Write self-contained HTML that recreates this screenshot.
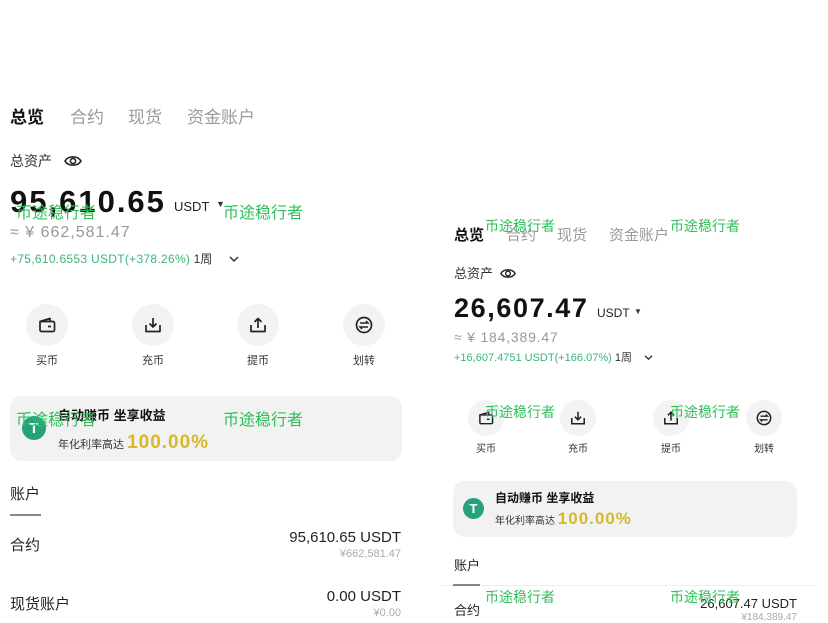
<!DOCTYPE html>
<html><head><meta charset="utf-8">
<style>
*{margin:0;padding:0;box-sizing:border-box}
body{width:828px;height:621px;background:#fff;position:relative;overflow:hidden;font-family:"Liberation Sans","Noto Sans CJK SC",sans-serif;color:#111}
.a{position:absolute;white-space:nowrap;line-height:1}
.tab{color:#9a9a9a}
.b{font-weight:bold}
.wm{position:absolute;color:#2fbf5a;white-space:nowrap;line-height:1}
.ic{position:absolute;border-radius:50%;background:#f3f3f3;display:flex;align-items:center;justify-content:center}
.card{position:absolute;background:#f2f2f2;border-radius:12px}
.t{position:absolute;border-radius:50%;background:#26a17b;color:#fff;font-weight:bold;display:flex;align-items:center;justify-content:center}
.gold{color:#d8b828;font-weight:bold;letter-spacing:1px}
.grn{color:#3bb57a}
</style></head><body>

<!-- LEFT -->
<div class="a b" style="left:10px;top:109px;font-size:17px">总览</div>
<div class="a tab" style="left:70px;top:109px;font-size:17px">合约</div>
<div class="a tab" style="left:128px;top:109px;font-size:17px">现货</div>
<div class="a tab" style="left:187px;top:109px;font-size:17px">资金账户</div>
<div class="a" style="left:10px;top:154px;font-size:14px;color:#333">总资产</div>
<svg class="a" style="left:64px;top:154px" width="18" height="14" viewBox="0 0 18 14"><path d="M1 7C4 1.5 14 1.5 17 7C14 12.5 4 12.5 1 7Z" fill="none" stroke="#222" stroke-width="1.6"/><circle cx="9" cy="7" r="2.6" fill="none" stroke="#222" stroke-width="1.6"/></svg>
<div class="a b" style="left:10px;top:186px;font-size:31px;letter-spacing:2px">95,610.65</div>
<div class="a" style="left:174px;top:200px;font-size:13px;color:#222">USDT</div>
<div class="a" style="left:216px;top:200px;font-size:9px;color:#333">▼</div>
<div class="a" style="left:10px;top:225px;font-size:16px;color:#999;letter-spacing:1px">≈ ¥ 662,581.47</div>
<div class="a" style="left:10px;top:253px;font-size:12px"><span class="grn" style="letter-spacing:0.3px">+75,610.6553 USDT(+378.26%)</span> <span style="color:#333">1周</span></div>
<svg class="a" style="left:229px;top:255px" width="10" height="8" viewBox="0 0 10 8"><path d="M1 2L5 6L9 2" fill="none" stroke="#333" stroke-width="1.5"/></svg>

<div class="ic" style="left:26px;top:304px;width:42px;height:42px"><svg width="18" height="16" viewBox="0 0 18 16"><path d="M2 4.5L12 1.5V4.5M2 4.5H15a1.5 1.5 0 0 1 1.5 1.5V13a1.5 1.5 0 0 1-1.5 1.5H3.5A1.5 1.5 0 0 1 2 13Z" fill="none" stroke="#222" stroke-width="1.7" stroke-linejoin="round"/><path d="M10 9.5H13" stroke="#222" stroke-width="1.7"/></svg></div>
<div class="ic" style="left:132px;top:304px;width:42px;height:42px"><svg width="18" height="18" viewBox="0 0 18 18"><path d="M9 2V11M5.5 7.5L9 11L12.5 7.5M2 9V15.5H16V9" fill="none" stroke="#222" stroke-width="1.7" stroke-linejoin="round"/></svg></div>
<div class="ic" style="left:237px;top:304px;width:42px;height:42px"><svg width="18" height="18" viewBox="0 0 18 18"><path d="M9 12V2.5M5.5 6L9 2.5L12.5 6M2 9V15.5H16V9" fill="none" stroke="#222" stroke-width="1.7" stroke-linejoin="round"/></svg></div>
<div class="ic" style="left:343px;top:304px;width:42px;height:42px"><svg width="18" height="18" viewBox="0 0 18 18"><circle cx="9" cy="9" r="7.5" fill="none" stroke="#222" stroke-width="1.7"/><path d="M5 7H13L11 5M13 11H5L7 13" fill="none" stroke="#222" stroke-width="1.5"/></svg></div>
<div class="a" style="left:36px;top:356px;font-size:11px;color:#333">买币</div>
<div class="a" style="left:142px;top:356px;font-size:11px;color:#333">充币</div>
<div class="a" style="left:247px;top:356px;font-size:11px;color:#333">提币</div>
<div class="a" style="left:353px;top:356px;font-size:11px;color:#333">划转</div>

<div class="card" style="left:10px;top:396px;width:392px;height:65px"></div>
<div class="t" style="left:22px;top:416px;width:24px;height:24px;font-size:15px">T</div>
<div class="a b" style="left:58px;top:409px;font-size:13px">自动赚币 坐享收益</div>
<div class="a" style="left:58px;top:433px;font-size:11px;color:#333">年化利率高达 <span class="gold" style="font-size:19px">100.00%</span></div>

<div class="a" style="left:10px;top:487px;font-size:15px;color:#222">账户</div>
<div class="a" style="left:10px;top:514px;width:31px;height:1.5px;background:#888"></div>
<div class="a" style="left:10px;top:538px;font-size:15px;color:#222">合约</div>
<div class="a" style="right:427px;top:530px;font-size:15px;color:#222">95,610.65 USDT</div>
<div class="a" style="right:427px;top:549px;font-size:11px;color:#aaa">¥662,581.47</div>
<div class="a" style="left:10px;top:597px;font-size:15px;color:#222">现货账户</div>
<div class="a" style="right:427px;top:589px;font-size:15px;color:#222">0.00 USDT</div>
<div class="a" style="right:427px;top:608px;font-size:11px;color:#aaa">¥0.00</div>

<div class="wm" style="left:16px;top:206px;font-size:16px">币途稳行者</div>
<div class="wm" style="left:223px;top:206px;font-size:16px">币途稳行者</div>
<div class="wm" style="left:16px;top:413px;font-size:16px">币途稳行者</div>
<div class="wm" style="left:223px;top:413px;font-size:16px">币途稳行者</div>

<!-- RIGHT -->
<div class="a b" style="left:454px;top:228px;font-size:15px">总览</div>
<div class="a tab" style="left:506px;top:228px;font-size:15px">合约</div>
<div class="a tab" style="left:557px;top:228px;font-size:15px">现货</div>
<div class="a tab" style="left:609px;top:228px;font-size:15px">资金账户</div>
<div class="a" style="left:454px;top:267px;font-size:13px;color:#333">总资产</div>
<svg class="a" style="left:500px;top:267px" width="16" height="13" viewBox="0 0 18 14"><path d="M1 7C4 1.5 14 1.5 17 7C14 12.5 4 12.5 1 7Z" fill="none" stroke="#222" stroke-width="1.6"/><circle cx="9" cy="7" r="2.6" fill="none" stroke="#222" stroke-width="1.6"/></svg>
<div class="a b" style="left:454px;top:295px;font-size:27px;letter-spacing:1.6px">26,607.47</div>
<div class="a" style="left:597px;top:307px;font-size:12px;color:#222">USDT</div>
<div class="a" style="left:634px;top:308px;font-size:8px;color:#333">▼</div>
<div class="a" style="left:454px;top:330px;font-size:14px;color:#999;letter-spacing:0.8px">≈ ¥ 184,389.47</div>
<div class="a" style="left:454px;top:353px;font-size:11px"><span class="grn">+16,607.4751 USDT(+166.07%)</span> <span style="color:#333">1周</span></div>
<svg class="a" style="left:644px;top:354px" width="9" height="7" viewBox="0 0 10 8"><path d="M1 2L5 6L9 2" fill="none" stroke="#333" stroke-width="1.5"/></svg>

<div class="ic" style="left:468px;top:400px;width:36px;height:36px"><svg width="16" height="14" viewBox="0 0 18 16"><path d="M2 4.5L12 1.5V4.5M2 4.5H15a1.5 1.5 0 0 1 1.5 1.5V13a1.5 1.5 0 0 1-1.5 1.5H3.5A1.5 1.5 0 0 1 2 13Z" fill="none" stroke="#222" stroke-width="1.7"/><path d="M10 9.5H13" stroke="#222" stroke-width="1.7"/></svg></div>
<div class="ic" style="left:560px;top:400px;width:36px;height:36px"><svg width="16" height="16" viewBox="0 0 18 18"><path d="M9 2V11M5.5 7.5L9 11L12.5 7.5M2 9V15.5H16V9" fill="none" stroke="#222" stroke-width="1.7"/></svg></div>
<div class="ic" style="left:653px;top:400px;width:36px;height:36px"><svg width="16" height="16" viewBox="0 0 18 18"><path d="M9 12V2.5M5.5 6L9 2.5L12.5 6M2 9V15.5H16V9" fill="none" stroke="#222" stroke-width="1.7"/></svg></div>
<div class="ic" style="left:746px;top:400px;width:36px;height:36px"><svg width="16" height="16" viewBox="0 0 18 18"><circle cx="9" cy="9" r="7.5" fill="none" stroke="#222" stroke-width="1.7"/><path d="M5 7H13L11 5M13 11H5L7 13" fill="none" stroke="#222" stroke-width="1.5"/></svg></div>
<div class="a" style="left:476px;top:445px;font-size:10px;color:#333">买币</div>
<div class="a" style="left:568px;top:445px;font-size:10px;color:#333">充币</div>
<div class="a" style="left:661px;top:445px;font-size:10px;color:#333">提币</div>
<div class="a" style="left:754px;top:445px;font-size:10px;color:#333">划转</div>

<div class="card" style="left:453px;top:481px;width:344px;height:56px"></div>
<div class="t" style="left:463px;top:498px;width:21px;height:21px;font-size:13px">T</div>
<div class="a b" style="left:495px;top:492px;font-size:12px">自动赚币 坐享收益</div>
<div class="a" style="left:495px;top:510px;font-size:10px;color:#333">年化利率高达 <span class="gold" style="font-size:17px">100.00%</span></div>

<div class="a" style="left:454px;top:559px;font-size:13px;color:#222">账户</div>
<div class="a" style="left:440px;top:585px;width:375px;height:1px;background:#eee"></div>
<div class="a" style="left:453px;top:584px;width:27px;height:1.5px;background:#888"></div>
<div class="a" style="left:454px;top:604px;font-size:13px;color:#222">合约</div>
<div class="a" style="right:31px;top:597px;font-size:13px;color:#222">26,607.47 USDT</div>
<div class="a" style="right:31px;top:613px;font-size:10px;color:#aaa">¥184,389.47</div>

<div class="wm" style="left:485px;top:219px;font-size:14px">币途稳行者</div>
<div class="wm" style="left:670px;top:219px;font-size:14px">币途稳行者</div>
<div class="wm" style="left:485px;top:405px;font-size:14px">币途稳行者</div>
<div class="wm" style="left:670px;top:405px;font-size:14px">币途稳行者</div>
<div class="wm" style="left:485px;top:590px;font-size:14px">币途稳行者</div>
<div class="wm" style="left:670px;top:590px;font-size:14px">币途稳行者</div>
</body></html>
